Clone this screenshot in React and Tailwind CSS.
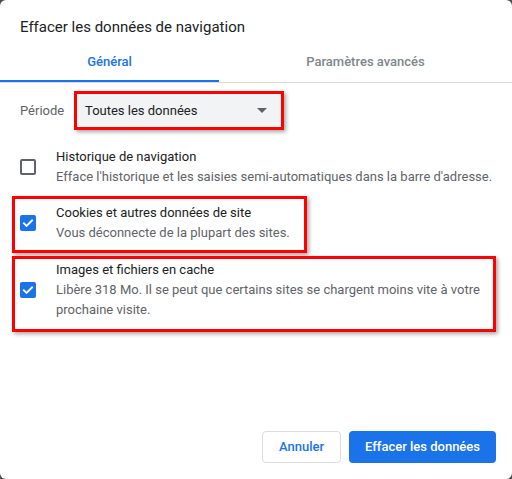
import React from 'react';

const Checkbox = ({ checked }) =>
    checked ? (
        <div className="w-[16px] h-[16px] rounded-[2px] bg-[#1a73e8] flex items-center justify-center shrink-0">
            <svg viewBox="0 0 24 24" className="w-[14px] h-[14px]" fill="none" stroke="white" strokeWidth="3.2" strokeLinecap="square">
                <path d="M5 12.5l4.5 4.5L19 7.5" />
            </svg>
        </div>
    ) : (
        <div className="w-[16px] h-[16px] rounded-[2px] border-2 border-[#5f6368] shrink-0" />
    );

const Row = ({ checked, title, children }) => (
    <div className="flex items-center gap-[20px]">
        <Checkbox checked={checked} />
        <div className="text-[13px] leading-[20px]">
            <div className="text-[#202124]">{title}</div>
            <div className="text-[#5f6368]">{children}</div>
        </div>
    </div>
);

export default function App() {
    return (
        <div className="w-[512px] h-[479px] bg-[#4d4d4d] font-['Roboto',sans-serif]">
            <div className="w-full h-full bg-white rounded-[6px] flex flex-col">
                {/* Title */}
                <div className="pt-[17px] pl-[20px] h-[37px] text-[15px] leading-[20px] text-[#202124]">
                    Effacer les données de navigation
                </div>

                {/* Tabs */}
                <div className="mt-[6px] flex border-b border-[#dadce0]">
                    <div className="w-[219px] h-[39px] flex items-center justify-center border-b-2 border-[#1a73e8] text-[13px] font-medium text-[#1a73e8]">
                        Général
                    </div>
                    <div className="flex-1 h-[39px] flex items-center justify-center border-b-2 border-transparent text-[13px] font-medium text-[#80868b]">
                        Paramètres avancés
                    </div>
                </div>

                {/* Période */}
                <div className="mt-[8px] flex items-center pl-[20px]">
                    <div className="w-[54px] text-[13px] text-[#5f6368]">Période</div>
                    <div className="w-[210px] h-[39px] border-[3px] border-[#ff0000] shadow-[2px_2px_4px_rgba(0,0,0,0.35)]">
                        <div className="h-full bg-[#f1f3f4] flex items-center justify-between pl-[8px] pr-[14px] text-[13px] text-[#202124]">
                            <span>Toutes les données</span>
                            <svg viewBox="0 0 10 5" className="w-[10px] h-[5px]">
                                <path d="M0 0h10L5 5z" fill="#5f6368" />
                            </svg>
                        </div>
                    </div>
                </div>

                {/* Options */}
                <div className="mt-[17px] pl-[20px]">
                    <Row checked={false} title="Historique de navigation">
                        Efface l'historique et les saisies semi-automatiques dans la barre d'adresse.
                    </Row>
                </div>

                <div className="mt-[9px] ml-[12px] w-[295px] border-[3px] border-[#ff0000] pl-[5px] pt-[4px] pb-[7px] shadow-[2px_2px_4px_rgba(0,0,0,0.35)]">
                    <Row checked title="Cookies et autres données de site">
                        Vous déconnecte de la plupart des sites.
                    </Row>
                </div>

                <div className="mt-[3px] ml-[12px] w-[484px] border-[3px] border-[#ff0000] pl-[5px] pt-[1px] pb-[9px] shadow-[2px_2px_4px_rgba(0,0,0,0.35)]">
                    <Row checked title="Images et fichiers en cache">
                        Libère 318 Mo. Il se peut que certains sites se chargent moins vite à votre
                        <br />
                        prochaine visite.
                    </Row>
                </div>

                {/* Actions */}
                <div className="mt-auto pb-[16px] pr-[16px] flex justify-end gap-[8px]">
                    <button className="w-[79px] h-[32px] rounded-[4px] border border-[#dadce0] bg-white text-[13px] font-medium text-[#1a73e8]">
                        Annuler
                    </button>
                    <button className="w-[147px] h-[32px] rounded-[4px] bg-[#1a73e8] text-[13px] font-medium text-white">
                        Effacer les données
                    </button>
                </div>
            </div>
        </div>
    );
}
